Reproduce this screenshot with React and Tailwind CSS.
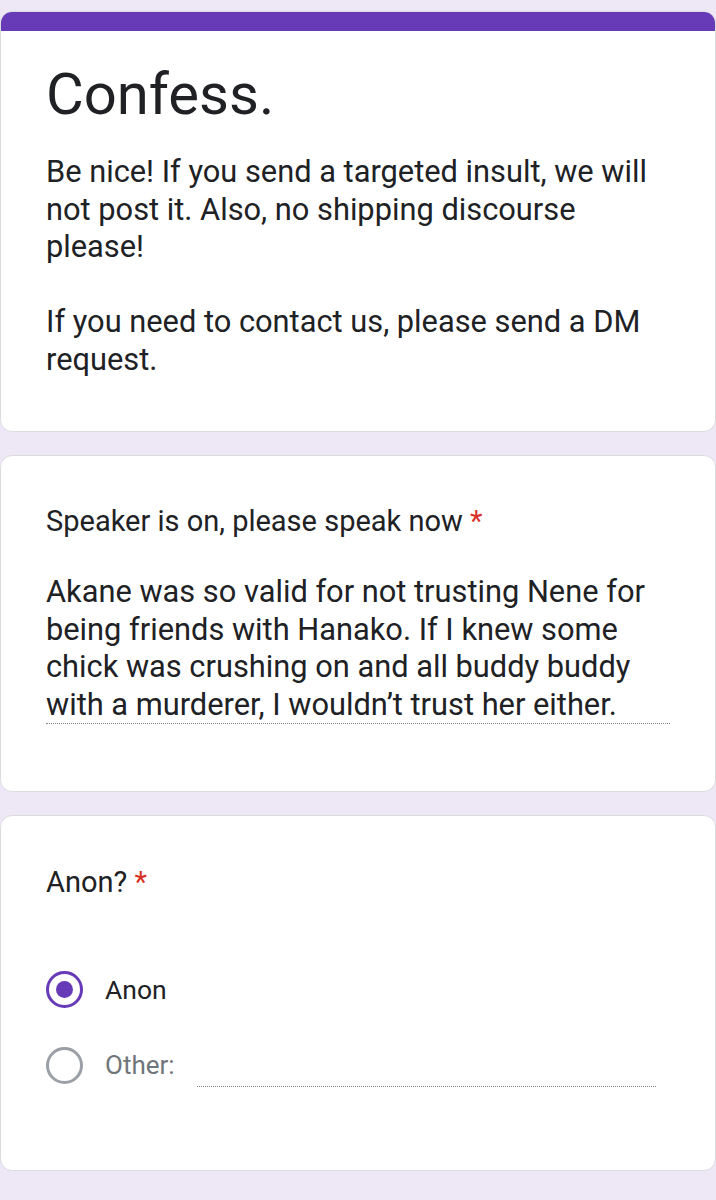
import React from 'react';

const FONT = { fontFamily: 'Roboto, "Liberation Sans", sans-serif' };

const Radio = ({ checked }) => (
  <span
    className={`flex h-[37px] w-[37px] shrink-0 items-center justify-center rounded-full border-[3px] ${
      checked ? 'border-[#673ab7]' : 'border-[#9aa0a6]'
    }`}
  >
    {checked && <span className="h-[17px] w-[17px] rounded-full bg-[#673ab7]" />}
  </span>
);

export default function App() {
  return (
    <div className="min-h-[1200px] bg-[#ede7f6] pt-[11px] text-[#202124]" style={FONT}>
      <div className="flex flex-col gap-[23px]">
        {/* Header card */}
        <div className="overflow-hidden rounded-[12px] border border-[#dadce0] bg-white">
          <div className="h-[19px] bg-[#673ab7]" />
          <div className="px-[45px] pb-[53px] pt-[18px]">
            <h1 className="text-[58px] leading-[90px]">Confess.</h1>
            <div className="mt-[14px] text-[30.8px] leading-[37.5px]">
              <p>Be nice! If you send a targeted insult, we will not post it. Also, no shipping discourse please!</p>
              <p className="mt-[37.5px]">If you need to contact us, please send a DM request.</p>
            </div>
          </div>
        </div>

        {/* Question card */}
        <div className="rounded-[12px] border border-[#dadce0] bg-white px-[45px] pb-[67px] pt-[46px]">
          <p className="text-[29px] leading-[38px]">
            Speaker is on, please speak now <span className="text-[#d93025]">*</span>
          </p>
          <div className="mt-[33px] border-b border-dotted border-[#80868b] text-[30.8px] leading-[37.5px]">
            Akane was so valid for not trusting Nene for being friends with Hanako. If I knew some chick was crushing on and all buddy buddy with a murderer, I wouldn’t trust her either.
          </div>
        </div>

        {/* Radio card */}
        <div className="mb-[28px] rounded-[12px] border border-[#dadce0] bg-white px-[45px] pb-[83px] pt-[47px]">
          <p className="text-[29px] leading-[38px]">
            Anon? <span className="text-[#d93025]">*</span>
          </p>
          <div className="mt-[69px] flex flex-col gap-[35px]">
            <div className="flex items-center gap-[22px]">
              <Radio checked />
              <span className="text-[26.5px]">Anon</span>
            </div>
            <div className="flex items-center gap-[22px]">
              <Radio />
              <span className="text-[26px] text-[#70757a]">Other:</span>
              <span className="mt-[41px] mr-[14px] h-0 flex-1 border-b border-dotted border-[#80868b]" />
            </div>
          </div>
        </div>
      </div>
    </div>
  );
}
